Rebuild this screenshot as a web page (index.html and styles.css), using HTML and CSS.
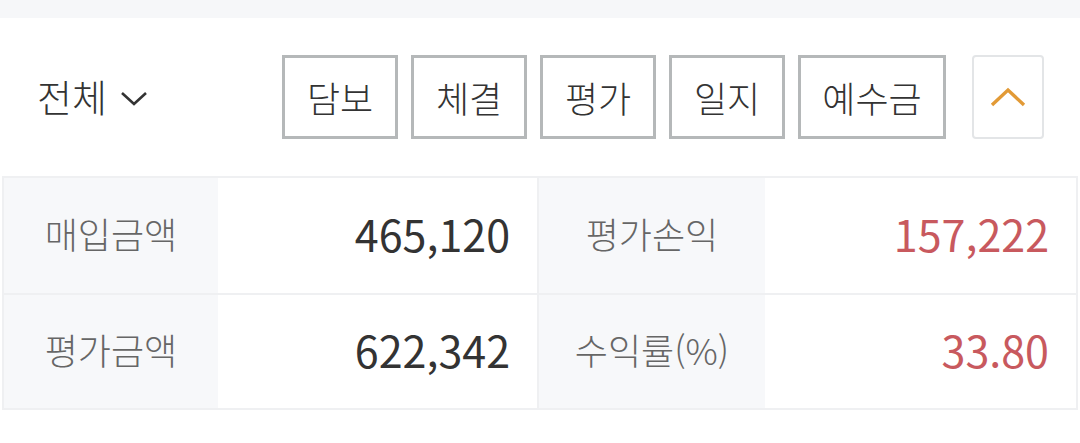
FILE: index.html
```html
<!DOCTYPE html>
<html lang="ko">
<head>
<meta charset="utf-8">
<link rel="stylesheet" href="styles.css">
</head>
<body>
<div class="topstrip"></div>
<div class="header">
  <div class="filter">
    <span class="filter-text">전체</span>
    <svg class="chev-down" width="28" height="16" viewBox="0 0 28 16"><path d="M2 2 L14 13 L26 2" fill="none" stroke="#333" stroke-width="2.6"/></svg>
  </div>
  <div class="actions">
    <button class="btn">담보</button>
    <button class="btn">체결</button>
    <button class="btn">평가</button>
    <button class="btn">일지</button>
    <button class="btn btn-wide">예수금</button>
    <button class="btn-up"><svg width="36" height="20" viewBox="0 0 36 20"><path d="M2 18 L18 3 L34 18" fill="none" stroke="#e29a36" stroke-width="3.4"/></svg></button>
  </div>
</div>
<div class="summary">
  <div class="cell label">매입금액</div>
  <div class="cell value">465,120</div>
  <div class="cell label sep">평가손익</div>
  <div class="cell value red">157,222</div>
  <div class="cell label top">평가금액</div>
  <div class="cell value top">622,342</div>
  <div class="cell label sep top">수익률(%)</div>
  <div class="cell value red top">33.80</div>
</div>
</body>
</html>
```

FILE: styles.css
```css
* { box-sizing: border-box; }
html, body { margin: 0; padding: 0; background: #fff; }
body {
  width: 1080px;
  height: 443px;
  overflow: hidden;
  font-family: "Noto Sans CJK KR", "Noto Sans", sans-serif;
  color: #333;
}
.topstrip { height: 18px; background: #f6f7f9; }
.header {
  height: 158px;
  display: flex;
  align-items: center;
  justify-content: space-between;
  padding: 0 36px 0 37px;
}
.filter { display: flex; align-items: center; gap: 13px; }
.filter-text { font-size: 38px; font-weight: 300; line-height: 1; color: #333; position: relative; top: -1px; }
.chev-down { margin-top: 4px; }
.actions { display: flex; align-items: center; gap: 13px; }
.btn {
  height: 84px;
  width: 116px;
  padding: 0;
  border: 3px solid #b5b8b9;
  background: #fff;
  font-family: inherit;
  font-size: 36px;
  font-weight: 300;
  line-height: 1;
  color: #333;
  border-radius: 0;
  margin: 0;
}
.btn-wide { width: 148px; }
.btn-up {
  width: 72px;
  height: 84px;
  margin-left: 13px;
  border: 2px solid #e3e5e7;
  border-radius: 4px;
  background: #fff;
  display: flex;
  align-items: center;
  justify-content: center;
  padding: 0;
}
.summary {
  margin: 0 2px;
  border: 2px solid #eff0f2;
  display: grid;
  grid-template-columns: 214px 319px 228px 1fr;
  grid-auto-rows: 115px;
}
.cell { display: flex; align-items: center; padding-bottom: 6px; }
.label {
  background: #f7f8fa;
  justify-content: center;
  font-size: 36px;
  font-weight: 300;
  color: #666;
}
.value {
  background: #fff;
  justify-content: flex-end;
  padding-right: 27px;
  font-size: 43px;
  color: #333;
}
.red { color: #c8595e; }
.sep { border-left: 2px solid #eff0f2; }
.top { border-top: 2px solid #eff0f2; }
```
